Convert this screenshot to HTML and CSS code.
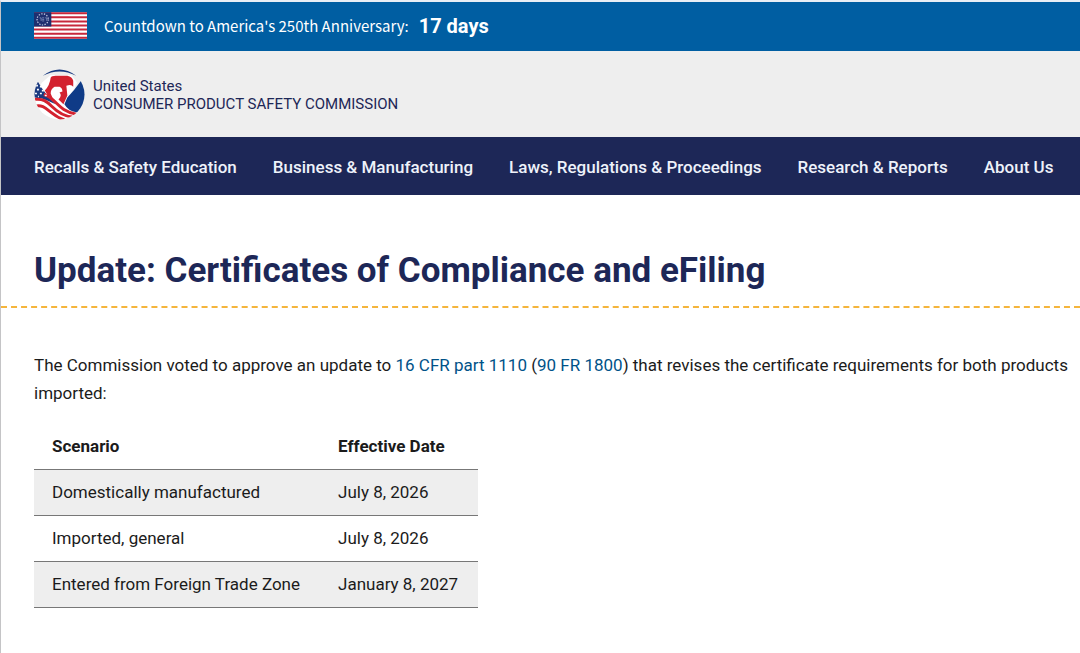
FILE: index.html
```html
<!DOCTYPE html>
<html lang="en">
<head>
<meta charset="utf-8">
<meta name="viewport" content="width=device-width, initial-scale=1">
<title>Update: Certificates of Compliance and eFiling</title>
<link rel="stylesheet" href="styles.css">
</head>
<body>
<div class="countdown">
  <svg class="flag" viewBox="0 0 52 26" aria-hidden="true">
    <rect width="52" height="26" fill="#fff"/>
    <path d="M0 1H52M0 5H52M0 9H52M0 13H52M0 17H52M0 21H52M0 25H52" stroke="#c8283c" stroke-width="2"/>
    <rect width="17" height="14" fill="#1d2f6f"/>
    <circle cx="8.500" cy="7" r="5.500" fill="none" stroke="#c3cbe3" stroke-width="1.200" stroke-dasharray="1.300 1.350"/>
    <path d="M5.500 5.500h1.500v3M8 5.500h2M8 7h2M8 8.500h2M11 5.500h1.500v3" fill="none" stroke="#93a2cb" stroke-width=".7"/>
  </svg>
  <span class="countdown-label">Countdown to America's 250th Anniversary:</span>
  <strong class="countdown-days">17 days</strong>
</div>
<header class="brand">
  <svg class="seal" viewBox="0 0 52 52" aria-hidden="true">
    <defs><clipPath id="disc"><circle cx="26" cy="26" r="25.500"/></clipPath></defs>
    <g clip-path="url(#disc)">
      <path d="M8 14L17 6H38L44 14L34 32L44 52H5L0 28Z" fill="#fff"/>
      <path d="M0 14L4 13Q8 20 12 25L22 36Q14 32 8 30L0 29Z" fill="#1b3a80"/>
      <path d="M48 12Q41 22 34 29L31 36Q35 43 43 44L52 42V12Z" fill="#0f3b87"/>
      <path d="M10 26C15 27 19 31 23 35S32 44 43 46M1 31C9 30 13 33 18 38S29 48 39 49M1 38C8 36 12 40 17 44S25 50 31 52" fill="none" stroke="#d3222f" stroke-width="3"/>
      <path d="M2 17h2M6 18h2M3 21h2M8 22h2M1 25h2M6 25h2M11 27h2M4 28h1" stroke="#fff" stroke-width="1.700"/>
    </g>
    <path d="M17 9Q18 7 22 7H34Q39 8 40 12V18Q38 15 33 17L34 27L30 36L25 31Q29 27 26 24L29 23Q29 19 26 18H21Q17 20 17 25L20 32L14 27L11 22Q16 17 17 9Z" fill="#d3222f"/>
    <path d="M9 7Q26 -6 43 7Q26 -2 9 7Z" fill="#15387f"/>
  </svg>
  <div class="agency"><span>United States</span><span>CONSUMER PRODUCT SAFETY COMMISSION</span></div>
</header>
<nav class="menu" aria-label="Main">
  <a href="#recalls">Recalls &amp; Safety Education</a>
  <a href="#business">Business &amp; Manufacturing</a>
  <a href="#laws">Laws, Regulations &amp; Proceedings</a>
  <a href="#research">Research &amp; Reports</a>
  <a href="#about">About Us</a>
</nav>
<main>
  <h1>Update: Certificates of Compliance and eFiling</h1>
  <div class="content">
    <p>The Commission voted to approve an update to <a href="#part1110">16 CFR part 1110</a> (<a href="#fr1800">90 FR 1800</a>) that revises the certificate requirements for both products<br>imported:</p>
    <table>
      <thead><tr><th scope="col">Scenario</th><th scope="col">Effective Date</th></tr></thead>
      <tbody>
        <tr><td>Domestically manufactured</td><td>July 8, 2026</td></tr>
        <tr><td>Imported, general</td><td>July 8, 2026</td></tr>
        <tr><td>Entered from Foreign Trade Zone</td><td>January 8, 2027</td></tr>
      </tbody>
    </table>
  </div>
</main>
</body>
</html>
```
FILE: styles.css
```css
* { box-sizing: border-box; }
body {
  margin: 0;
  min-height: 100vh;
  border-top: 2px solid #e9eef5;
  border-left: 1px solid #c4c4c6;
  overflow-x: hidden;
  background: #fff;
  color: #1b1b1b;
  font: 17px/28px Roboto, sans-serif;
}
.countdown {
  display: flex;
  align-items: center;
  height: 49px;
  padding: 0 33px 2px;
  background: #005ea2;
  color: #fff;
}
.flag { width: 53px; height: 27px; margin-right: 17px; }
.countdown-label { font: 15px/24px "Noto Sans CJK SC", sans-serif; margin-right: 10px; }
.countdown-days { font-size: 20px; }
.brand {
  display: flex;
  align-items: center;
  height: 86px;
  padding: 0 33px;
  background: #eee;
  color: #1d2757;
}
.seal { width: 51px; height: 51px; margin-right: 8px; }
.agency { display: flex; flex-direction: column; padding-top: 2px; font-size: 15px; line-height: 18px; }
.menu {
  display: flex;
  gap: 36px;
  padding: 16px 33px 14px;
  background: #1d2757;
  white-space: nowrap;
}
.menu a { color: #eef2fa; font-weight: 500; text-decoration: none; }
h1 {
  margin: 0;
  padding: 53px 33px 13px;
  border-bottom: 2px dashed #f5b53c;
  color: #1d2757;
  font-size: 35px;
  line-height: 45px;
}
.content { padding: 43px 33px; }
p { margin: 0 0 17px; white-space: nowrap; }
p a { color: #005288; text-decoration: none; }
table { border-collapse: collapse; }
th, td { padding: 9px 20px 9px 18px; border-bottom: 1px solid #777; line-height: 27px; text-align: left; }
tbody tr:nth-child(odd) { background: #eee; }
```
